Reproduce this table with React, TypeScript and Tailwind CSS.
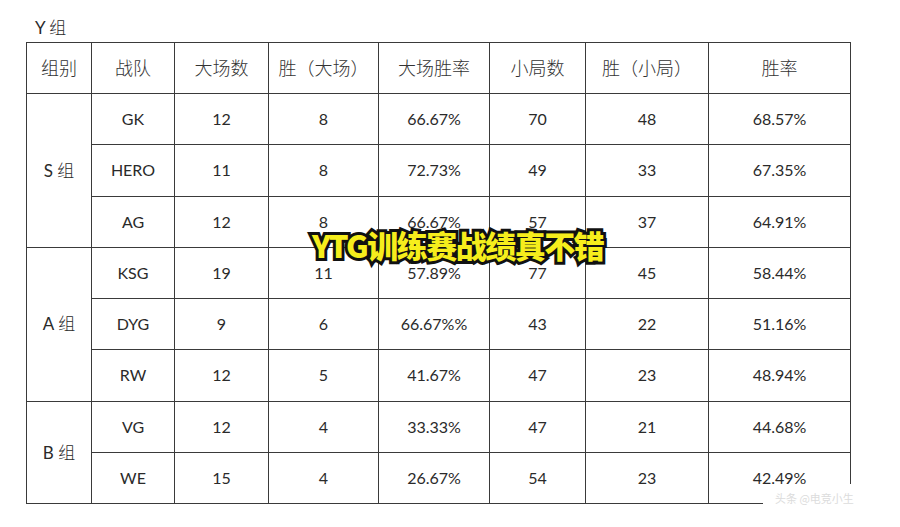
const cols = [65, 83, 94, 110, 111, 96, 123, 142];

const headers = ["组别", "战队", "大场数", "胜（大场）", "大场胜率", "小局数", "胜（小局）", "胜率"];

type Row = { group?: string; span?: number; cells: string[] };

const rows: Row[] = [
  { group: "S 组", span: 3, cells: ["GK", "12", "8", "66.67%", "70", "48", "68.57%"] },
  { cells: ["HERO", "11", "8", "72.73%", "49", "33", "67.35%"] },
  { cells: ["AG", "12", "8", "66.67%", "57", "37", "64.91%"] },
  { group: "A 组", span: 3, cells: ["KSG", "19", "11", "57.89%", "77", "45", "58.44%"] },
  { cells: ["DYG", "9", "6", "66.67%%", "43", "22", "51.16%"] },
  { cells: ["RW", "12", "5", "41.67%", "47", "23", "48.94%"] },
  { group: "B 组", span: 2, cells: ["VG", "12", "4", "33.33%", "47", "21", "44.68%"] },
  { cells: ["WE", "15", "4", "26.67%", "54", "23", "42.49%"] },
];

const font = "font-['Lato','Noto_Sans_CJK_SC',sans-serif]";
const cell = "border border-[#3a3a3a] text-center align-middle p-0";

export default function App() {
  return (
    <div className={`relative w-[900px] h-[527px] bg-white overflow-hidden text-[#2a2a2a] ${font}`}>
      <div className="pl-[35px] pt-[17px] h-[42px] text-[17px] leading-[22px]">
        Y <span className="font-light">组</span>
      </div>
      <table className="ml-[26px] border-collapse table-fixed">
        <colgroup>
          {cols.map((w, i) => (
            <col key={i} style={{ width: w }} />
          ))}
        </colgroup>
        <thead>
          <tr className="h-[51px]">
            {headers.map((h) => (
              <th key={h} className={`${cell} font-light text-[18px] text-[#333]`}>
                {h}
              </th>
            ))}
          </tr>
        </thead>
        <tbody>
          {rows.map((r, i) => (
            <tr key={i} className="h-[51.25px]">
              {r.group && (
                <td rowSpan={r.span} className={`${cell} text-[17px]`}>
                  {r.group.split(" ")[0]} <span className="font-light">组</span>
                </td>
              )}
              {r.cells.map((c, j) => (
                <td key={j} className={`${cell} text-[16px]`}>
                  {c}
                </td>
              ))}
            </tr>
          ))}
        </tbody>
      </table>

      <div className="absolute left-[312px] top-[226px] text-[31px] leading-[38px] font-black text-[#f6ee1c] [-webkit-text-stroke:6px_#111] [paint-order:stroke_fill] font-['Noto_Sans_CJK_SC',sans-serif] tracking-[-1.5px]">
        YTG训练赛战绩真不错
      </div>

      <div className="absolute left-[763px] top-[484px] w-[100px] h-[28px] bg-white flex items-center pl-[12px] text-[11px] text-[#dcdcdc] font-['Noto_Sans_CJK_SC',sans-serif]">
        头条 @电竞小生
      </div>
    </div>
  );
}
